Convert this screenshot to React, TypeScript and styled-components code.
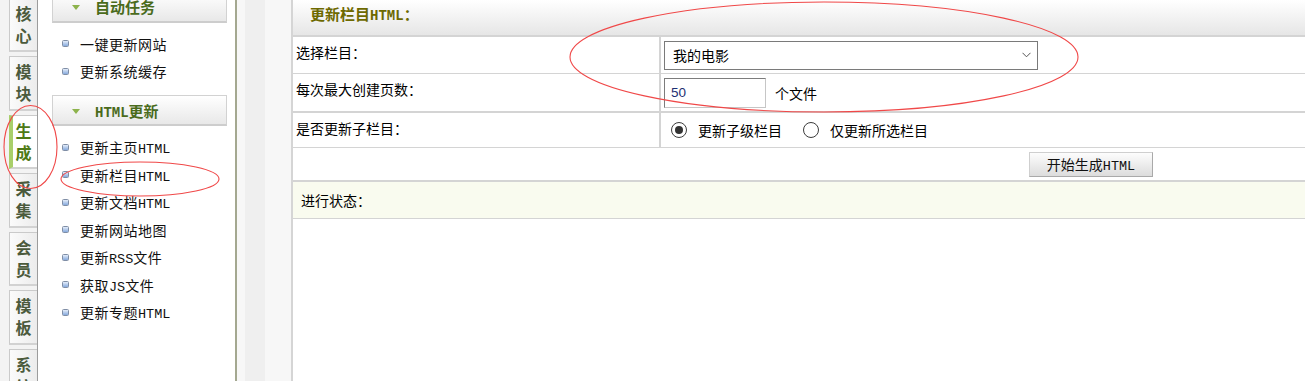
import React from 'react';
import styled, { createGlobalStyle, css } from 'styled-components';

const GlobalStyle = createGlobalStyle`
  html, body, #root { margin: 0; padding: 0; height: 100%; overflow: hidden; background: #fff; }
  body {
    font-family: "Noto Sans CJK SC", "Liberation Sans", sans-serif;
    font-size: 14px;
    color: #000;
  }
  * { box-sizing: border-box; }
`;

const Page = styled.div`
  position: relative;
  display: flex;
  width: 1305px;
  height: 381px;
  overflow: hidden;
`;

/* ---------- left vertical tabs ---------- */
const TabColumn = styled.nav`
  flex: 0 0 38px;
  background: #f3f3f3;
  border-right: 1px solid #9c9c9c;
  padding-left: 9px;
`;

const TabList = styled.div`
  display: flex;
  flex-direction: column;
  gap: 4px;
  margin-top: -2.5px;
`;

const Tab = styled.div<{ $active?: boolean }>`
  height: 54.5px;
  flex: none;
  display: flex;
  flex-direction: column;
  align-items: center;
  padding-top: 3px;
  border: 1px solid #cacaca;
  border-right: none;
  border-bottom: 2px solid #d2d2d2;
  background: linear-gradient(to right, #fbfbfb, #ececec);
  color: #4b5a3c;
  font-size: 16px;
  line-height: 22px;
  font-weight: 700;
  ${(p) =>
    p.$active &&
    css`
      background: #fff;
      border-left: 4px solid #a9cf6a;
      padding-right: 3px;
      color: #4e7a16;
    `}
`;

const TabChar = styled.span`
  display: block;
`;

/* ---------- sidebar ---------- */
const Sidebar = styled.aside`
  flex: 0 0 199px;
  background: #fff;
  border-right: 2px solid #a4a890;
  padding: 0 8px 0 14px;
`;

const SidebarInner = styled.div`
  margin-top: -8.3px;
`;

const SectionHeader = styled.div`
  height: 31px;
  display: flex;
  align-items: center;
  gap: 15px;
  padding-left: 19px;
  border: 1px solid #d2d2d2;
  border-bottom: 2px solid #cdcdcd;
  background: linear-gradient(#ffffff, #e8e8e8);
  color: #4a6b1c;
  font-size: 15px;
  font-weight: 700;
`;

const Triangle = styled.span`
  width: 0;
  height: 0;
  border-left: 4.5px solid transparent;
  border-right: 4.5px solid transparent;
  border-top: 5px solid #8db34c;
  margin-top: 2px;
`;

const HeaderLatin = styled.span`
  font-family: "Liberation Mono", monospace;
  font-size: 14px;
  font-weight: 700;
`;

const MenuList = styled.ul`
  list-style: none;
  margin: 0;
  padding: 7.5px 0 10px 10px;
`;

const MenuItem = styled.li`
  height: 27.5px;
  display: flex;
  align-items: center;
  gap: 11px;
  font-size: 14px;
  letter-spacing: 0.5px;
  color: #111;
`;

const Bullet = styled.span`
  flex: none;
  width: 7px;
  height: 7px;
  border: 1px solid #7f8ea6;
  border-radius: 1.5px;
  background: linear-gradient(#e4edfa, #86a9dc);
`;

const Latin = styled.span`
  font-family: "Liberation Mono", monospace;
  font-size: 13.5px;
  letter-spacing: 0;
`;

/* ---------- gutter ---------- */
const Gutter = styled.div`
  flex: 0 0 54px;
  background: linear-gradient(
    to right,
    #f7f7f7 0 8px,
    #efefef 8px 28px,
    #f7f7f7 28px 54px
  );
`;

/* ---------- main ---------- */
const Main = styled.main`
  flex: 1;
  min-width: 0;
  border-left: 2px solid #d5d5d5;
  background: #fff;
  display: flex;
  flex-direction: column;
`;

const MainHeader = styled.div`
  height: 37px;
  flex: none;
  padding: 4px 0 0 17px;
  line-height: 20px;
  border-bottom: 2px solid #d4d4d4;
  background: linear-gradient(#ffffff, #e6e6e6);
  color: #6d6900;
  font-size: 15px;
  font-weight: 700;
`;

const FormRow = styled.div<{ $h: number; $line: number }>`
  flex: none;
  display: grid;
  grid-template-columns: 368px 1fr;
  height: ${(p) => p.$h}px;
  border-bottom: ${(p) => p.$line}px solid #d4d4d4;
`;

const LabelCell = styled.div`
  padding: 5px 0 0 3px;
  line-height: 20px;
  border-right: 2px solid #d4d4d4;
`;

const ValueCell = styled.div`
  display: flex;
  align-items: center;
  padding-left: 3px;
`;

const SelectBox = styled.div`
  width: 374px;
  height: 29px;
  border: 1px solid #7a7a7a;
  background: #fff;
  display: flex;
  align-items: center;
  justify-content: space-between;
  padding: 0 6px 0 8px;
`;

const NumberInput = styled.div`
  width: 102px;
  height: 30px;
  border: 1px solid #c6c6c6;
  border-top-color: #7c7c7c;
  border-left-color: #7c7c7c;
  display: flex;
  align-items: center;
  padding-left: 6px;
  font-family: "Liberation Sans", Arial, sans-serif;
  font-size: 13.5px;
  color: #1e2f72;
`;

const Unit = styled.span`
  margin-left: 9px;
`;

const RadioGroup = styled.div`
  display: flex;
  align-items: center;
  padding-left: 7px;
`;

const Radio = styled.span<{ $checked?: boolean }>`
  width: 16px;
  height: 16px;
  border-radius: 50%;
  border: 1.5px solid #3c3c3c;
  display: inline-flex;
  align-items: center;
  justify-content: center;
  background: #fff;
  &::after {
    content: '';
    width: 8px;
    height: 8px;
    border-radius: 50%;
    background: ${(p) => (p.$checked ? '#333' : 'transparent')};
  }
`;

const RadioLabel = styled.span<{ $last?: boolean }>`
  margin-left: 11px;
  margin-right: ${(p) => (p.$last ? 0 : 21)}px;
`;

const ActionRow = styled.div`
  flex: none;
  height: 34px;
  border-bottom: 2px solid #d4d4d4;
  display: flex;
  align-items: center;
  padding-left: 736px;
`;

const Button = styled.button`
  width: 124px;
  height: 25px;
  padding: 0;
  border: 1px solid #a9a9a9;
  border-top-color: #cfcfcf;
  border-left-color: #cfcfcf;
  background: linear-gradient(#fdfdfd, #dcdcdc);
  font-family: "Noto Sans CJK SC", "Liberation Sans", sans-serif;
  font-size: 14px;
  color: #111;
  line-height: 23px;
`;

const StatusRow = styled.div`
  flex: none;
  height: 37px;
  border-bottom: 1px solid #d4d4d4;
  background: #f9fbef;
  display: flex;
  align-items: center;
  padding-left: 8px;
`;

const Annotations = styled.svg`
  position: absolute;
  left: 0;
  top: 0;
  pointer-events: none;
`;

const Chevron = () => (
  <svg width="9" height="6" viewBox="0 0 9 6">
    <path d="M0.5 0.8 L4.5 4.8 L8.5 0.8" fill="none" stroke="#555" strokeWidth="1" />
  </svg>
);

const tabs = ['核心', '模块', '生成', '采集', '会员', '模板', '系统'];

type Item = { zh: string; latin?: string; tail?: string };

const renderItem = (it: Item, i: number) => (
  <MenuItem key={i}>
    <Bullet />
    <span>
      {it.zh}
      {it.latin && <Latin>{it.latin}</Latin>}
      {it.tail}
    </span>
  </MenuItem>
);

const autoItems: Item[] = [{ zh: '一键更新网站' }, { zh: '更新系统缓存' }];
const htmlItems: Item[] = [
  { zh: '更新主页', latin: 'HTML' },
  { zh: '更新栏目', latin: 'HTML' },
  { zh: '更新文档', latin: 'HTML' },
  { zh: '更新网站地图' },
  { zh: '更新', latin: 'RSS', tail: '文件' },
  { zh: '获取', latin: 'JS', tail: '文件' },
  { zh: '更新专题', latin: 'HTML' },
];

export default function App() {
  return (
    <>
      <GlobalStyle />
      <Page>
        <TabColumn>
          <TabList>
            {tabs.map((t) => (
              <Tab key={t} $active={t === '生成'}>
                {t.split('').map((c, i) => (
                  <TabChar key={i}>{c}</TabChar>
                ))}
              </Tab>
            ))}
          </TabList>
        </TabColumn>

        <Sidebar>
          <SidebarInner>
            <SectionHeader>
              <Triangle />
              <span>自动任务</span>
            </SectionHeader>
            <MenuList>{autoItems.map(renderItem)}</MenuList>
            <SectionHeader>
              <Triangle />
              <span>
                <HeaderLatin>HTML</HeaderLatin>更新
              </span>
            </SectionHeader>
            <MenuList>{htmlItems.map(renderItem)}</MenuList>
          </SidebarInner>
        </Sidebar>

        <Gutter />

        <Main>
          <MainHeader>
            更新栏目<HeaderLatin>HTML</HeaderLatin>：
          </MainHeader>
          <FormRow $h={37} $line={1}>
            <LabelCell>选择栏目：</LabelCell>
            <ValueCell>
              <SelectBox>
                <span>我的电影</span>
                <Chevron />
              </SelectBox>
            </ValueCell>
          </FormRow>
          <FormRow $h={39} $line={2}>
            <LabelCell>每次最大创建页数：</LabelCell>
            <ValueCell>
              <NumberInput>50</NumberInput>
              <Unit>个文件</Unit>
            </ValueCell>
          </FormRow>
          <FormRow $h={35} $line={1}>
            <LabelCell>是否更新子栏目：</LabelCell>
            <ValueCell>
              <RadioGroup>
                <Radio $checked />
                <RadioLabel>更新子级栏目</RadioLabel>
                <Radio />
                <RadioLabel $last>仅更新所选栏目</RadioLabel>
              </RadioGroup>
            </ValueCell>
          </FormRow>
          <ActionRow>
            <Button>
              开始生成<Latin>HTML</Latin>
            </Button>
          </ActionRow>
          <StatusRow>进行状态：</StatusRow>
        </Main>

        <Annotations width="1305" height="381" viewBox="0 0 1305 381">
          <ellipse cx="30.5" cy="147" rx="26.5" ry="41.5" fill="none" stroke="#f04848" strokeWidth="1.1" />
          <ellipse cx="140" cy="179" rx="79" ry="17" fill="none" stroke="#f04848" strokeWidth="1.1" />
          <ellipse cx="824" cy="57" rx="254" ry="55" fill="none" stroke="#f04848" strokeWidth="1.1" />
        </Annotations>
      </Page>
    </>
  );
}
